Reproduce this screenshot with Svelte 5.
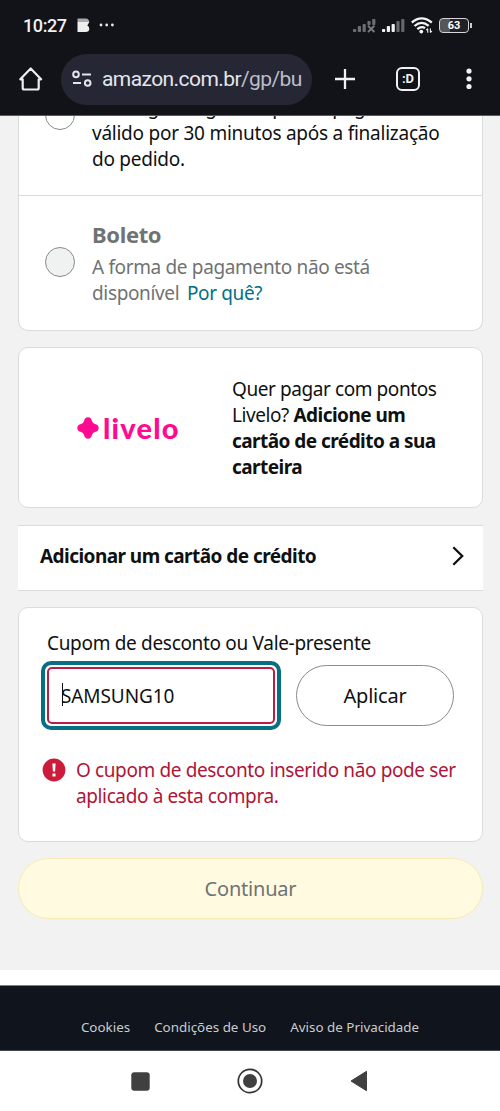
<script lang="ts">
	let coupon = $state('SAMSUNG10');
	const links = ['Cookies', 'Condições de Uso', 'Aviso de Privacidade'];
	const bars = [3, 6, 8, 11, 13];
</script>

<div class="screen">
	<header>
		<div class="status">
			<span class="clock">10:27</span>
			<svg class="app-icon" width="13" height="15" viewBox="0 0 13 15">
				<path d="M.5 4h11.8L10.3 7.5Q12.3 8.3 12.3 10.7Q12.3 14 8.5 14H.5z" fill="#eee" />
				<path d="M.5 .5h8.5q2.8 0 3.3 3.5H.5z" fill="#aaa" />
			</svg>
			<svg class="dots" width="16" height="4" viewBox="0 0 16 4" fill="#e8e8ea">
				<circle cx="2" cy="2" r="1.4" /><circle cx="7.7" cy="2" r="1.4" /><circle cx="13.4" cy="2" r="1.4" />
			</svg>
			<svg class="sim" width="23" height="15" viewBox="0 0 23 15">
				{#each bars as h, i}
					<rect x={i * 4.8} y={14 - h} width="3.2" height={i > 2 ? h - 7 : h} rx=".8" fill="#6c6d71" />
				{/each}
				<path d="M15 7.8l6.4 6.2M21.4 7.8L15 14" stroke="#77787c" stroke-width="1.9" />
			</svg>
			<svg class="signal" width="23" height="15" viewBox="0 0 23 15">
				{#each bars as h, i}
					<rect x={i * 4.8} y={14 - h} width="3.2" height={h} rx=".8" fill={i < 3 ? '#f2f2f3' : '#66676b'} />
				{/each}
			</svg>
			<svg class="wifi" width="22" height="17" viewBox="0 0 22 17" fill="none" stroke="#f5f5f5" stroke-width="2.3">
				<path d="M.8 5.5Q10.5-2.7 20.8 5.5M3.5 9Q10.5 2.9 17.7 8.8M6.3 12.2Q10.5 8.5 14 11.2" />
				<circle cx="10.3" cy="14.6" r="1.9" fill="#f5f5f5" stroke="none" />
				<path d="M16.7 15.8v-4M19.4 11.6v4M15.2 13.2l1.5-1.7M20.9 14l-1.5 1.7" stroke-width="1.1" />
			</svg>
			<div class="battery"><b>63</b></div>
		</div>
		<div class="toolbar">
			<svg class="home" width="24" height="24" viewBox="0 0 24 24" fill="none" stroke="#ededf2" stroke-width="2.2" stroke-linejoin="round" stroke-linecap="round">
				<path d="M1.3 12.3L11.7 1.5L22.1 12.3H19.7V21q0 1.5-1.5 1.5H5.2q-1.5 0-1.5-1.5V12.3z" />
			</svg>
			<div class="url">
				<svg width="20" height="18" viewBox="0 0 20 18" fill="none" stroke="#e4e4ec" stroke-width="2">
					<circle cx="4" cy="4.4" r="2.8" /><path d="M10 4.4h9M1 13h8" /><circle cx="15.7" cy="13" r="2.8" />
				</svg>
				<span>amazon.com.br<i>/gp/bu</i></span>
			</div>
			<svg class="plus" width="22" height="22" viewBox="0 0 22 22" stroke="#f1f1f4" stroke-width="2.3"><path d="M11 1v20M1 11h20" /></svg>
			<div class="tabs">:D</div>
			<svg class="more" width="6" height="22" viewBox="0 0 6 22" fill="#f1f1f4">
				<circle cx="3" cy="3.1" r="2.6" /><circle cx="3" cy="10.8" r="2.6" /><circle cx="3" cy="18.5" r="2.6" />
			</svg>
		</div>
	</header>

	<main>
		<section class="card methods">
			<div class="method pix">
				<span class="radio"></span>
				<p>O código Pix gerado para o pagamento é<br />válido por 30 minutos após a finalização<br />do pedido.</p>
			</div>
			<div class="method boleto">
				<span class="radio off"></span>
				<div>
					<h2>Boleto</h2>
					<p>A forma de pagamento não está<br />disponível <a href="#why">Por quê?</a></p>
				</div>
			</div>
		</section>

		<section class="card livelo">
			<div class="brand">
				<svg width="22" height="22" viewBox="0 0 22 22" fill="#ff0b91">
					<path d="M11 .3C13.4.3 14.4 2 15 4Q15.6 6.4 18 7C20.1 7.5 21.7 8.7 21.7 11S20.1 14.5 18 15Q15.6 15.6 15 18C14.4 20 13.4 21.7 11 21.7S7.6 20 7 18Q6.4 15.6 4 15C1.9 14.5.3 13.3.3 11S1.9 7.5 4 7Q6.4 6.4 7 4C7.6 2 8.6.3 11 .3z" />
				</svg>
				<span>livelo</span>
			</div>
			<p>Quer pagar com pontos<br />Livelo? <b>Adicione um<br />cartão de crédito a sua<br />carteira</b></p>
		</section>

		<a class="add-card" href="#add">
			<span>Adicionar um cartão de crédito</span>
			<svg width="12" height="20" viewBox="0 0 12 20" fill="none" stroke="#0f1111" stroke-width="2.3"><path d="M1.3 1.3L10.2 10L1.3 18.7" /></svg>
		</a>

		<section class="card coupon">
			<label for="coupon">Cupom de desconto ou Vale-presente</label>
			<div class="form">
				<div class="field">
					<span class="caret"></span>
					<input id="coupon" bind:value={coupon} />
				</div>
				<button class="apply">Aplicar</button>
			</div>
			<div class="error">
				<svg width="24" height="24" viewBox="0 0 24 24">
					<circle cx="12" cy="12" r="11.4" fill="#cb1c3c" />
					<path d="M10.4 5.5h3.2l-.5 8h-2.2zM10.5 15.6h3v3h-3z" fill="#fff" />
				</svg>
				<p>O cupom de desconto inserido não pode ser<br />aplicado à esta compra.</p>
			</div>
		</section>

		<button class="continue" disabled>Continuar</button>
	</main>

	<footer>
		{#each links as link}
			<a href="#legal">{link}</a>
		{/each}
	</footer>

	<nav>
		<svg width="19" height="19" viewBox="0 0 19 19"><rect x=".3" y=".3" width="18.4" height="18.4" rx="3" fill="#404040" /></svg>
		<svg width="26" height="26" viewBox="0 0 26 26"><circle cx="13" cy="13" r="11.7" fill="none" stroke="#333" stroke-width="1.7" /><circle cx="13" cy="13" r="7" fill="#404040" /></svg>
		<svg width="18" height="22" viewBox="0 0 18 22"><path d="M1 11L16.5 1.3V20.7z" fill="#404040" stroke="#404040" stroke-linejoin="round" /></svg>
	</nav>
</div>

<style>
	:global(body) {
		background: #fff;
	}
	.screen {
		width: 500px;
		height: 1111px;
		overflow: hidden;
		display: flex;
		flex-direction: column;
		font: 19px/26px "Noto Sans", sans-serif;
		letter-spacing: -0.32px;
		color: #0f1111;
	}
	* {
		box-sizing: border-box;
	}
	svg {
		flex-shrink: 0;
		display: block;
	}
	p, h2 {
		margin: 0;
		white-space: nowrap;
	}
	a {
		text-decoration: none;
	}
	header {
		height: 116px;
		flex-shrink: 0;
		background: #121318;
		border-bottom: 1px solid #5d5861;
		font-family: Roboto, sans-serif;
		letter-spacing: 0;
	}
	.status {
		height: 50px;
		display: flex;
		align-items: center;
		padding: 0 31px 0 23px;
	}
	.clock {
		color: #f0f0f2;
		font-size: 18px;
		font-weight: 500;
		letter-spacing: -0.4px;
		width: 54px;
		padding-top: 1px;
	}
	.dots {
		margin-left: 9px;
	}
	.sim {
		margin-left: auto;
	}
	.signal {
		margin-left: 6px;
	}
	.wifi {
		margin: 0 6px;
	}
	.battery {
		width: 30px;
		height: 15px;
		border: 1.5px solid #d5d5d5;
		border-radius: 4px;
		background: linear-gradient(90deg, #555659 35%, #202126 35%) padding-box;
		color: #fff;
		font-size: 11px;
		line-height: 13px;
		text-align: center;
		position: relative;
	}
	.battery::after {
		content: '';
		position: absolute;
		right: -4px;
		top: 4px;
		width: 2px;
		height: 5px;
		background: #ccc;
	}
	.toolbar {
		height: 58px;
		display: flex;
		align-items: center;
		padding: 0 28px 0 19px;
	}
	.url {
		width: 251px;
		height: 51px;
		flex-shrink: 0;
		margin: 0 22px 0 18px;
		border-radius: 26px;
		background: #252734;
		display: flex;
		align-items: center;
		gap: 10px;
		padding-left: 11px;
		font-size: 21px;
		letter-spacing: -0.58px;
		color: #e5e5ee;
		white-space: nowrap;
	}
	.url i {
		font-style: normal;
		color: #bdbdca;
	}
	.tabs {
		width: 24px;
		height: 24px;
		flex-shrink: 0;
		margin: 0 46px 0 40px;
		border: 2.4px solid #f1f1f4;
		border-radius: 6px;
		color: #f1f1f4;
		font-size: 13px;
		font-weight: 700;
		line-height: 19px;
		text-align: center;
	}
	main {
		height: 854px;
		flex-shrink: 0;
		padding: 0 17px 0 18px;
		background: #f2f2f2;
		display: flex;
		flex-direction: column;
	}
	.card {
		background: #fff;
		border: 1px solid #d8dcdc;
		border-radius: 10px;
	}
	.methods {
		height: 215px;
		border-top: 0;
		border-radius: 0 0 10px 10px;
		overflow: hidden;
	}
	.method {
		display: flex;
		padding-left: 26px;
		gap: 17px;
	}
	.pix {
		height: 80px;
		border-bottom: 1px solid #d8dcdc;
		letter-spacing: -0.25px;
	}
	.pix p {
		margin-top: -22px;
	}
	.radio {
		width: 30px;
		height: 30px;
		flex-shrink: 0;
		border: 1px solid #858a8a;
		border-radius: 50%;
		margin-top: -16px;
	}
	.radio.off {
		margin-top: 51px;
		background: #f0f2f2;
	}
	.boleto {
		color: #6f7373;
		letter-spacing: -0.35px;
	}
	h2 {
		margin: 24px 0 6px;
		font-size: 22px;
		line-height: 28px;
	}
	.boleto a {
		color: #007185;
		margin-left: 3px;
	}
	.livelo {
		height: 161px;
		margin-top: 16px;
		display: flex;
		align-items: center;
		padding-left: 58px;
		letter-spacing: -0.42px;
	}
	.livelo b {
		letter-spacing: -0.54px;
	}
	.brand {
		width: 155px;
		display: flex;
		align-items: center;
		gap: 4px;
		color: #ff0b91;
		font: 900 29px/30px "Lato", sans-serif;
		letter-spacing: 1.2px;
	}
	.add-card {
		height: 66px;
		margin: 17px 0 16px;
		border: solid #d8dcdc;
		border-width: 1px 0;
		background: #fff;
		color: #0f1111;
		font-weight: 700;
		letter-spacing: -0.55px;
		display: flex;
		align-items: center;
		justify-content: space-between;
		padding: 0 19px 5px 22px;
	}
	.coupon {
		height: 235px;
		padding: 22px 0 0 22px;
	}
	label {
		display: block;
		margin-left: 6px;
	}
	.form {
		display: flex;
		gap: 15px;
		margin-top: 5px;
	}
	.field {
		width: 240px;
		height: 69px;
		padding: 2px;
		border: 4px solid #086f83;
		border-radius: 10px;
		position: relative;
	}
	input {
		width: 100%;
		height: 100%;
		border: 2px solid #bb1e43;
		border-radius: 5px;
		padding: 0 0 0 12px;
		font: inherit;
		letter-spacing: -0.1px;
		color: inherit;
		background: #fff;
	}
	.caret {
		position: absolute;
		left: 17px;
		top: 18px;
		width: 1px;
		height: 23px;
		background: #111;
	}
	button {
		font: inherit;
		font-size: 20px;
		letter-spacing: -0.2px;
		padding: 0;
	}
	.apply {
		width: 158px;
		height: 61px;
		margin-top: 4px;
		border: 1px solid #888c8c;
		border-radius: 31px;
		background: #fff;
		color: #0f1111;
	}
	.error {
		display: flex;
		gap: 10px;
		margin: 27px 0 0 1px;
		color: #b01436;
		letter-spacing: -0.38px;
	}
	.error svg {
		margin-top: 1px;
	}
	.continue {
		height: 61px;
		margin-top: 16px;
		border: 1px solid #f8eab5;
		border-radius: 31px;
		background: #fffae0;
		color: #6f7373;
	}
	footer {
		height: 65px;
		margin-top: 15px;
		flex-shrink: 0;
		background: #0f141d;
		border-top: 1px solid #75807f;
		display: flex;
		justify-content: center;
		gap: 24px;
		padding-top: 28px;
		font-size: 13.4px;
		letter-spacing: 0;
	}
	footer a {
		color: #ccc;
	}
	nav {
		flex: 1;
		border-top: 1px solid #444851;
		display: flex;
		align-items: center;
		padding-left: 131px;
		gap: 87px;
	}
</style>
